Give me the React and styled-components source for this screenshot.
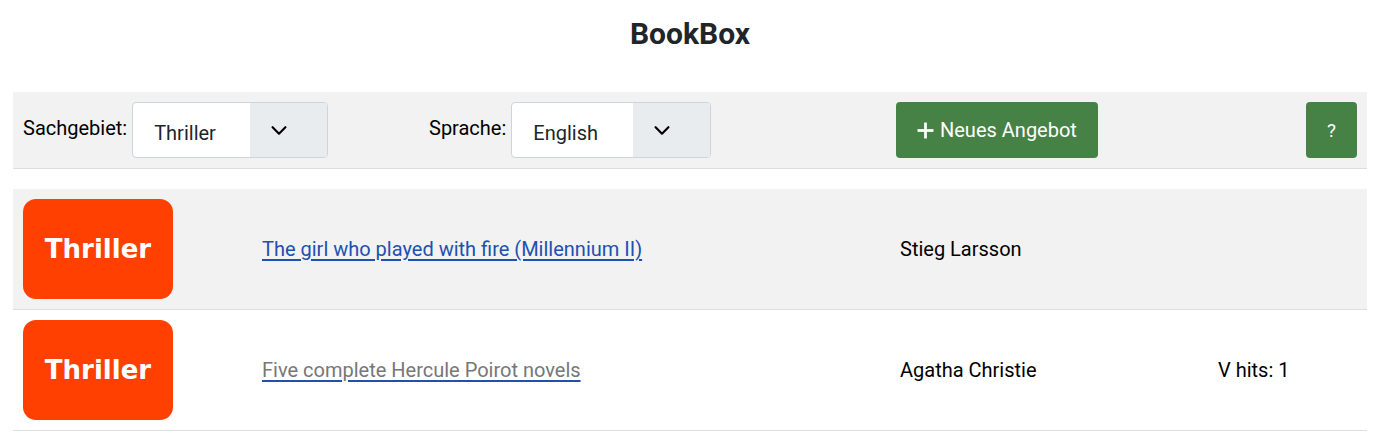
import React from 'react';
import styled, { createGlobalStyle } from 'styled-components';

const GlobalStyle = createGlobalStyle`
  body {
    margin: 0;
    background: #ffffff;
    font-family: Roboto, "Liberation Sans", sans-serif;
    color: #000;
  }
`;

const Page = styled.div`
  padding: 0 15px 0 13px;
`;

const Title = styled.h1`
  margin: 0;
  height: 70px;
  line-height: 68px;
  text-align: center;
  font-size: 30px;
  font-weight: 700;
  color: #212529;
`;

const Toolbar = styled.div`
  display: grid;
  grid-template-columns: 406px 467px 1fr auto;
  align-items: center;
  background: #f2f2f2;
  border-bottom: 1px solid #dedede;
  margin-top: 22px;
  padding: 10px;
`;

const Field = styled.div`
  display: flex;
  align-items: center;
  gap: 5px;
`;

const Label = styled.span`
  font-size: 20px;
  margin-top: -5px;
`;

const Select = styled.div`
  display: flex;
  height: 56px;
  box-sizing: border-box;
  border: 1px solid #ced4da;
  border-radius: 4px;
  overflow: hidden;
  background: #fff;
`;

const SelectValue = styled.div`
  width: ${p => p.$w}px;
  box-sizing: border-box;
  padding: 6px 0 0 21px;
  display: flex;
  align-items: center;
  font-size: 20px;
  color: #212529;
`;

const SelectArrow = styled.div`
  width: 77px;
  background: #e9ecef;
  display: flex;
  align-items: center;
  justify-content: center;
  padding-right: 20px;
  box-sizing: border-box;
`;

const Button = styled.button`
  height: 56px;
  border: none;
  border-radius: 4px;
  background: #468246;
  color: #fff;
  font-family: Roboto, "Liberation Sans", sans-serif;
  font-size: 20px;
  padding: 0 21px;
  display: flex;
  align-items: center;
  justify-content: center;
  gap: 6px;
  cursor: pointer;
`;

const HelpButton = styled(Button)`
  width: 51px;
  padding: 0;
  font-size: 19px;
  justify-self: end;
`;

const List = styled.div`
  margin-top: 20px;
`;

const Row = styled.div`
  display: grid;
  grid-template-columns: 239px 638px 318px 1fr;
  align-items: center;
  height: 121px;
  box-sizing: border-box;
  padding-left: 10px;
  background: ${p => (p.$shaded ? '#f2f2f2' : '#ffffff')};
  border-bottom: 1px solid #dedede;
`;

const Badge = styled.div`
  width: 150px;
  height: 100px;
  border-radius: 13px;
  background: #ff4000;
  color: #fff;
  display: flex;
  align-items: center;
  justify-content: center;
  font-family: "DejaVu Sans", Verdana, sans-serif;
  font-size: 26px;
  font-weight: 700;
`;

const BookLink = styled.a`
  font-size: 20px;
  color: ${p => (p.$visited ? '#777777' : '#2050b0')};
  text-decoration: underline;
  text-decoration-color: #2050b0;
  text-underline-offset: 3px;
`;

const Cell = styled.div`
  font-size: 20px;
`;

const Chevron = () => (
  <svg width="22" height="22" viewBox="0 0 24 24" fill="none" stroke="#000" strokeWidth="2.4" strokeLinecap="round" strokeLinejoin="round">
    <polyline points="5 9 12 16 19 9" />
  </svg>
);

const Plus = () => (
  <svg width="17" height="17" viewBox="0 0 16 16" stroke="#fff" strokeWidth="2.6">
    <line x1="8" y1="0.5" x2="8" y2="15.5" />
    <line x1="0.5" y1="8" x2="15.5" y2="8" />
  </svg>
);

const books = [
  { title: 'The girl who played with fire (Millennium II)', author: 'Stieg Larsson', hits: null, visited: false },
  { title: 'Five complete Hercule Poirot novels', author: 'Agatha Christie', hits: 'V hits: 1', visited: true },
];

export default function App() {
  return (
    <>
      <GlobalStyle />
      <Page>
        <Title>BookBox</Title>
        <Toolbar>
          <Field>
            <Label>Sachgebiet:</Label>
            <Select>
              <SelectValue $w={117}>Thriller</SelectValue>
              <SelectArrow><Chevron /></SelectArrow>
            </Select>
          </Field>
          <Field>
            <Label>Sprache:</Label>
            <Select>
              <SelectValue $w={121}>English</SelectValue>
              <SelectArrow><Chevron /></SelectArrow>
            </Select>
          </Field>
          <div>
            <Button><Plus />Neues Angebot</Button>
          </div>
          <HelpButton>?</HelpButton>
        </Toolbar>
        <List>
          {books.map((b, i) => (
            <Row key={b.title} $shaded={i % 2 === 0}>
              <Badge>Thriller</Badge>
              <div>
                <BookLink href="#" $visited={b.visited}>{b.title}</BookLink>
              </div>
              <Cell>{b.author}</Cell>
              <Cell>{b.hits}</Cell>
            </Row>
          ))}
        </List>
      </Page>
    </>
  );
}
